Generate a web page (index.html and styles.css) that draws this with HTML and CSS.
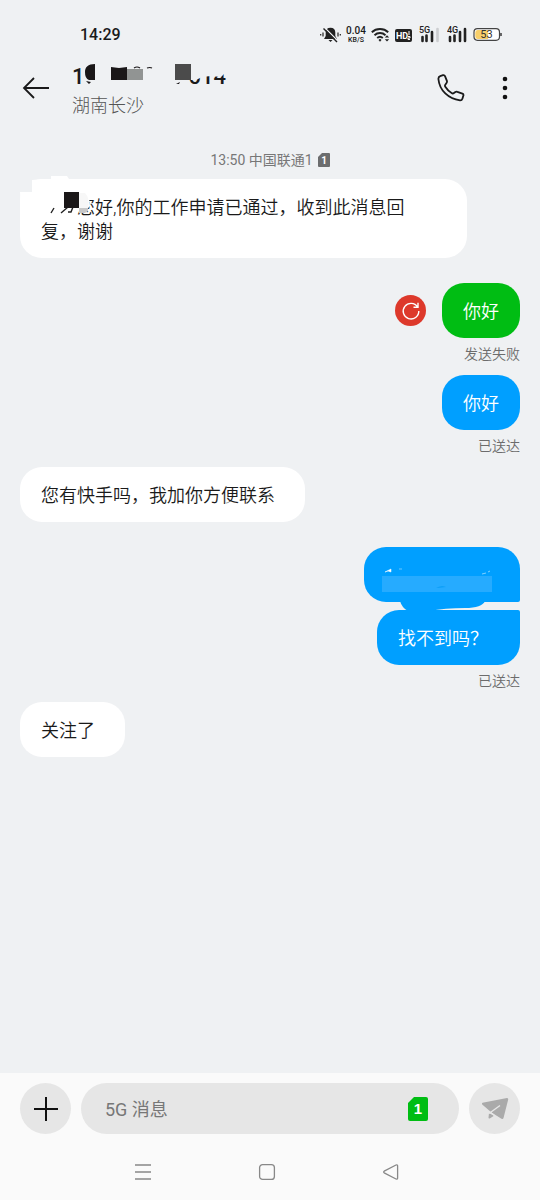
FILE: index.html
```html
<!DOCTYPE html>
<html lang="zh-CN">
<head>
    <meta charset="UTF-8">
    <meta name="viewport" content="width=device-width, initial-scale=1.0">
    <title>短信</title>
    <link rel="stylesheet" href="styles.css">
</head>
<body>

<div class="status-bar">
    <span class="clock">14:29</span>
    <div class="status-icons">
        <!-- muted bell -->
        <svg width="21" height="20" viewBox="0 0 21 20">
            <path d="M10.500 2.800c-3.200 0-4.800 2-4.800 4.800v3.500L4 14h13l-1.700-2.900V7.600c0-2.800-1.600-4.800-4.800-4.800zM8.500 15h4l-2 2z" fill="#222"/>
            <path d="M4.500 2.500l13 13" stroke="#eff1f3" stroke-width="1.300"/>
            <path d="M3.500 3.500l13.500 13.500" stroke="#222" stroke-width="1.400"/>
            <path d="M3 7.500v4M.7 9v1.500M18 7.500v4M20.300 9v1.500" stroke="#222" stroke-width="1.200"/>
        </svg>
        <div class="speed"><b>0.04</b><small>KB/S</small></div>
        <!-- wifi -->
        <svg width="20" height="20" viewBox="0 0 20 20">
            <path d="M.8 7.200a12 12 0 0 1 16.400 0M3.500 10.200a8 8 0 0 1 11 0M6.200 13a4.200 4.200 0 0 1 5.600 0" fill="none" stroke="#222" stroke-width="1.900"/>
            <path d="M7.500 15L9 13.800l1.500 1.200L9 16.700z" fill="#222"/>
            <path d="M13.800 12.500l2.200-2.300 2.200 2.300zM13.800 14.200l2.200 2.300 2.200-2.300z" fill="#222"/>
        </svg>
        <svg width="20" height="20" viewBox="0 0 20 20">
            <rect x="0" y="4" width="17" height="13" rx="2" fill="#222"/>
            <text x="1" y="14" class="hd-text">HD</text>
            <path d="M14 6v4M13 11.500h2v1.500h-2v1.500h2" fill="none" stroke="#fff" stroke-width="1"/>
        </svg>
        <svg width="24" height="20" viewBox="0 0 24 20">
            <text x="0" y="8" class="net-text">5G</text>
            <path d="M3.500 12v4M7.500 10.500V16M13 7v9" stroke="#222" stroke-width="2.600" stroke-linecap="round"/>
            <path d="M18.500 4v12" stroke="#ccced0" stroke-width="2.600" stroke-linecap="round"/>
        </svg>
        <svg width="22" height="20" viewBox="0 0 22 20">
            <text x="0" y="8" class="net-text">4G</text>
            <path d="M3 12v4M7.500 10.500V16M13 7v9M18 4v12" stroke="#222" stroke-width="2.600" stroke-linecap="round"/>
        </svg>
        <svg width="29" height="20" viewBox="0 0 29 20">
            <rect x="1" y="3.700" width="25.500" height="11.600" rx="3.500" fill="#fff" stroke="#444" stroke-width="1.200"/>
            <path d="M4.500 5H15v9H4.500A2.500 2.500 0 0 1 2.300 11.500v-4A2.500 2.500 0 0 1 4.500 5z" fill="#f8cf6a"/>
            <path d="M28 8v3" stroke="#444" stroke-width="1.600"/>
            <text x="13.500" y="13" text-anchor="middle" class="battery-text">53</text>
        </svg>
    </div>
</div>

<header class="header">
    <button class="icon-btn" aria-label="返回">
        <svg width="28" height="24" viewBox="0 0 28 24" fill="none" stroke="#1a1a1a" stroke-width="1.800">
            <path d="M27 12H2M12 2L2 12l10 10"/>
        </svg>
    </button>
    <div class="contact">
        <h1 class="number">
            <span>1</span><span class="number-tail">014</span>
            <svg class="number-mask" width="160" height="30" viewBox="0 0 160 30">
                <path d="M112 0h48v11l-8 1-3 3-10-1-9 1-6 3h-12z" fill="#eff1f3"/>
                <path d="M23 2v16h-6a5 8 0 0 1-4-8c0-5 3-8 10-8zM14 19l5 1-2 2z" fill="#1a1718"/>
                <path d="M39 5l8 1 8-1v13H39z" fill="#1a1718"/>
                <path d="M55 7h16v11H55z" fill="#919493"/>
                <path d="M62 6q3-2 6 0M75 6q3-1 5 0" fill="none" stroke="#1a1718" stroke-width="1.200"/>
                <path d="M103 2h16v16h-16z" fill="#4b4b4b"/>
                <path d="M104 22l4-2-1 2z" fill="#1a1718"/>
            </svg>
        </h1>
        <p class="region">湖南长沙</p>
    </div>
    <button class="icon-btn call-btn" aria-label="拨打电话">
        <svg width="28" height="28" viewBox="0 0 28 28" fill="none" stroke="#1a1a1a" stroke-width="1.800" stroke-linejoin="round">
            <path d="M3.200 2.200L6 1.200c1-.3 1.600 0 2 .9l1.900 4.700c.3.900.1 1.500-.4 2.200L8.300 10.700c-.5.700-.5 1.300 0 2.100 1.700 2.700 3.600 4.700 6.300 6.300.8.500 1.600.5 2.300 0l1.500-1.100c.6-.4 1.300-.5 2-.2l5 1.800c1 .4 1.300 1 1 2l-1 3.100c-.4 1.200-1.100 1.700-2.400 1.600C11.500 25 2.500 16.500 1.400 5c-.1-1.400.4-2.300 1.800-2.800z"/>
        </svg>
    </button>
    <button class="icon-btn" aria-label="更多">
        <svg width="8" height="26" viewBox="0 0 8 26" fill="#111">
            <circle cx="4" cy="4" r="2.300"/><circle cx="4" cy="13" r="2.300"/><circle cx="4" cy="22" r="2.300"/>
        </svg>
    </button>
</header>

<main class="feed">
    <p class="timestamp">13:50 中国联通1
        <svg width="12" height="14" viewBox="0 0 12 14">
            <path d="M4 0h7a1 1 0 0 1 1 1v12a1 1 0 0 1-1 1H1a1 1 0 0 1-1-1V4z" fill="#6c6d6e"/>
            <text x="6" y="11" text-anchor="middle" class="sim-text-sm">1</text>
        </svg>
    </p>

    <div class="bubble received first">　　您好,你的工作申请已通过，收到此消息回<br>复，谢谢
        <svg class="name-mask" width="100" height="50" viewBox="0 0 100 50">
            <path d="M0 0h12v16H0z" fill="#eff1f3"/>
            <path d="M0 16h12V4q8-1 19-1V0h16l2 3h20v13l-60 20H1z" fill="#fff"/>
            <path d="M40 14h28l2 16-4 4H58z" fill="#fff"/>
            <path d="M31 37l3-5M41 37l7-6M49 31l4 0-2 5-3 0" fill="none" stroke="#222" stroke-width="1.400"/>
            <path d="M58 17l7 0q5 5 3 15H58z" fill="#f7f7f7"/>
            <path d="M44 16h15v16H44z" fill="#1a1718"/>
            <path d="M59 32h9v3l-3 2h-6z" fill="#c8c8c8"/>
        </svg>
    </div>

    <div class="sent-row after-received">
        <button class="retry-btn" aria-label="重新发送">
            <svg width="20" height="20" viewBox="0 0 20 20" fill="none" stroke="#fff" stroke-width="1.400">
                <path d="M16.600 6A7.800 7.800 0 1 0 17.800 10M17 1.800V6.300H12.500"/>
            </svg>
        </button>
        <div class="bubble sent green">你好</div>
    </div>
    <p class="state">发送失败</p>

    <div class="sent-row">
        <div class="bubble sent">你好</div>
    </div>
    <p class="state">已送达</p>

    <div class="bubble received">您有快手吗，我加你方便联系</div>

    <div class="sent-row after-received">
        <div class="bubble sent hidden-text">
            <svg class="text-mask" width="156" height="66" viewBox="0 0 156 66">
                <path d="M36 54h85q-3 7-20 7-20 0-36 3H44q-6-3-8-10z" fill="#009fff"/>
                <path d="M18 29h110v16H18z" fill="#26abff"/>
                <path d="M21 25l6-3v3l-3-1zM118 27l4-1M124 25l2-1" fill="#fff" stroke="#fff" stroke-width=".5"/>
                <path d="M72 41q5-3 10-1z" fill="#079cf5"/>
                <path d="M35 22l3 0" stroke="#6bc6ff" stroke-width="1"/>
            </svg>
        </div>
    </div>
    <div class="sent-row grouped">
        <div class="bubble sent wide">找不到吗？</div>
    </div>
    <p class="state">已送达</p>

    <div class="bubble received">关注了</div>
</main>

<footer class="bottom">
    <form class="composer">
        <button type="button" class="round-btn" aria-label="添加">
            <svg width="24" height="24" viewBox="0 0 24 24" stroke="#111" stroke-width="2">
                <path d="M12 0v24M0 12h24"/>
            </svg>
        </button>
        <div class="field">
            <input type="text" class="message-input" placeholder="5G 消息" aria-label="5G 消息">
            <button type="button" class="sim-btn" aria-label="SIM 1">
                <svg width="20" height="24" viewBox="0 0 20 24">
                    <path d="M6 0h12a2 2 0 0 1 2 2v20a2 2 0 0 1-2 2H2a2 2 0 0 1-2-2V6z" fill="#00bd13"/>
                    <text x="10" y="17" text-anchor="middle" class="sim-text">1</text>
                </svg>
            </button>
        </div>
        <button type="submit" class="round-btn" aria-label="发送">
            <svg width="28" height="24" viewBox="0 0 28 24">
                <path d="M1.500 5.700L26 1q1.500 0 1.200 1.500L22.500 21q-.6 1.500-2 .7l-10-6.200L1.200 7.500Q.5 6.200 1.500 5.700zM8 16l5 2.800-4.300 2.700q-1.200.3-1.200-1z" fill="#aaa"/>
                <path d="M8 16.500L19 8.500M9 15l5 4" stroke="#e6e6e6" stroke-width="1.400"/>
            </svg>
        </button>
    </form>
    <nav class="system-nav">
        <button class="icon-btn" aria-label="菜单">
            <svg width="20" height="20" viewBox="0 0 20 20" stroke="#888" stroke-width="1.300"><path d="M2 3h16M2 10h16M2 17h16"/></svg>
        </button>
        <button class="icon-btn" aria-label="主页">
            <svg width="20" height="20" viewBox="0 0 20 20" fill="none" stroke="#888" stroke-width="1.300"><rect x="2.600" y="2.600" width="14.800" height="14.800" rx="3"/></svg>
        </button>
        <button class="icon-btn" aria-label="后退">
            <svg width="20" height="20" viewBox="0 0 20 20" fill="none" stroke="#888" stroke-width="1.300" stroke-linejoin="round"><path d="M3.200 9.200L15 3q1.600-.5 1.600 1v12q0 1.500-1.600 1L3.200 10.800q-1-.8 0-1.600z"/></svg>
        </button>
    </nav>
</footer>

</body>
</html>
```

FILE: styles.css
```css
* {
    box-sizing: border-box;
}

body {
    font-family: Roboto, "Noto Sans CJK SC", sans-serif;
    background-color: #eff1f3;
    color: #1a1a1a;
    margin: 0;
    display: flex;
    flex-direction: column;
    min-height: 100vh;
}

h1, p {
    margin: 0;
}

svg {
    display: block;
}

button {
    border: none;
    padding: 0;
    background: none;
    cursor: pointer;
}

/* Status bar */
.status-bar {
    display: flex;
    align-items: center;
    justify-content: space-between;
    height: 56px;
    padding: 13px 38px 0 80px;
}

.clock {
    font-size: 16px;
    font-weight: 500;
}

.status-icons {
    display: flex;
    align-items: center;
    gap: 4px;
}

.speed {
    width: 22px;
    display: flex;
    flex-direction: column;
    align-items: center;
    line-height: 10px;
}

.speed b {
    font-size: 10px;
    font-weight: 500;
}

.speed small {
    font-size: 7px;
    font-weight: 500;
    line-height: 8px;
}

.hd-text {
    font-size: 9px;
    font-weight: bold;
    fill: #fff;
}

.net-text {
    font-size: 9px;
    font-weight: 500;
    fill: #222;
}

.battery-text {
    font-size: 11px;
    font-weight: 400;
    fill: #333;
}

/* Contact header */
.header {
    display: flex;
    align-items: center;
    height: 64px;
    padding: 0 31px 0 22px;
}

.contact {
    flex: 1;
    padding: 6px 0 0 22px;
}

.number {
    position: relative;
    display: flex;
    gap: 104px;
    font-size: 22px;
    font-weight: 500;
    line-height: 26px;
}

.number-mask {
    position: absolute;
    left: 0;
    top: -2px;
}

.region {
    font-size: 18px;
    font-weight: 300;
    line-height: 24px;
    padding-top: 4px;
    color: #555;
}

.call-btn {
    margin-right: 36px;
}

/* Messages */
.feed {
    flex: 1;
    display: flex;
    flex-direction: column;
    padding: 30px 20px 20px;
}

.timestamp {
    display: flex;
    justify-content: center;
    align-items: center;
    gap: 5px;
    font-size: 14px;
    line-height: 20px;
    margin-bottom: 9px;
    color: #777;
}

.bubble {
    font-size: 18px;
    font-weight: 350;
    line-height: 24px;
    padding: 17px 21px 14px;
    border-radius: 22px;
}

.received {
    align-self: flex-start;
    padding-right: 30px;
    background-color: #fff;
}

.received.first {
    position: relative;
    align-self: stretch;
    margin-right: 53px;
}

.name-mask {
    position: absolute;
    left: 0;
    top: -3px;
}

.sent-row {
    display: flex;
    justify-content: flex-end;
    align-items: center;
    gap: 16px;
}

.after-received {
    margin-top: 25px;
}

.grouped {
    margin-top: 8px;
}

.sent {
    background-color: #009fff;
    color: #fff;
}

.sent.green {
    background-color: #00bd13;
}

.sent.wide {
    padding-right: 32px;
    border-top-right-radius: 2px;
}

.hidden-text {
    position: relative;
    width: 156px;
    height: 55px;
    border-bottom-right-radius: 2px;
}

.text-mask {
    position: absolute;
    left: 0;
    top: 0;
}

.retry-btn {
    display: flex;
    align-items: center;
    justify-content: center;
    width: 31px;
    height: 31px;
    border-radius: 50%;
    background-color: #dd392b;
}

.state {
    align-self: flex-end;
    margin: 6px 0 11px;
    font-size: 14px;
    font-weight: 350;
    line-height: 20px;
    color: #6c6c6c;
}

.sim-text-sm {
    font-size: 10px;
    font-weight: bold;
    fill: #fff;
}

/* Composer and system navigation */
.bottom {
    background-color: #fafafa;
    padding: 10px 20px 18px;
}

.composer {
    display: flex;
    align-items: center;
    gap: 10px;
}

.round-btn {
    display: flex;
    align-items: center;
    justify-content: center;
    flex: none;
    width: 51px;
    height: 51px;
    border-radius: 50%;
    background-color: #e6e6e6;
}

.field {
    flex: 1;
    display: flex;
    align-items: center;
    height: 51px;
    padding: 0 31px 0 24px;
    border-radius: 26px;
    background-color: #e6e6e6;
}

.message-input {
    flex: 1;
    min-width: 0;
    border: none;
    outline: none;
    padding: 2px 0 0;
    background: none;
    font-family: inherit;
    font-size: 18px;
}

.message-input::placeholder {
    color: #777;
}

.sim-text {
    font-size: 15px;
    font-weight: 900;
    fill: #fff;
}

.system-nav {
    display: flex;
    justify-content: center;
    gap: 104px;
    padding: 28px 6px 0 0;
}
```
